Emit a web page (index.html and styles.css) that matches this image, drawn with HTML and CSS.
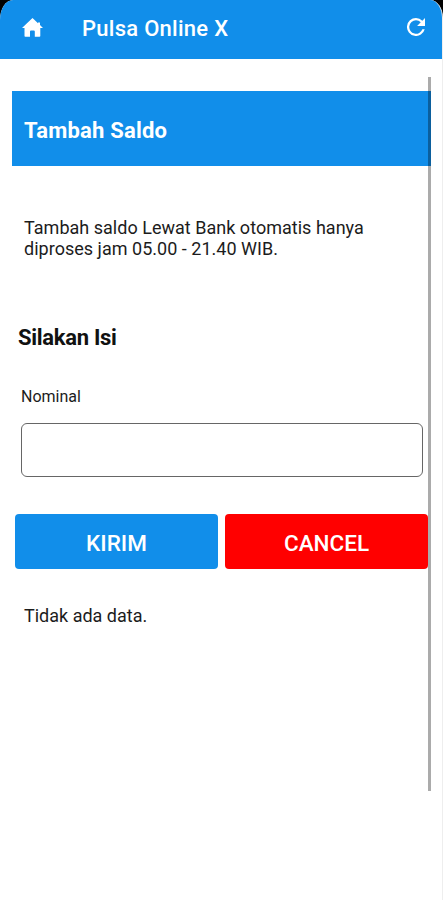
FILE: index.html
```
<!DOCTYPE html>
<html lang="id">
<head>
<meta charset="utf-8">
<title>Pulsa Online X</title>
<link rel="stylesheet" href="styles.css">
</head>
<body>
<div class="screen">
  <header class="topbar">
    <svg class="home" viewBox="0 0 21 19" aria-hidden="true"><path d="M10.5 0 0 10h2.500v8q0 .8.8.8H8v-5.300q0-1 1-1h2.800q1 0 1 1v5.300h4.700q.8 0 .8-.8v-8H21L18 7.100V4.500h-2v.8z"/></svg>
    <h1 class="app-title">Pulsa Online X</h1>
    <svg class="refresh" viewBox="4 4 16 16" preserveAspectRatio="none" aria-hidden="true"><path d="M17.650 6.350A7.960 7.960 0 0 0 12 4a8 8 0 1 0 7.730 10h-2.080A6 6 0 1 1 12 6c1.660 0 3.140.690 4.220 1.780L13 11h7V4z"/></svg>
  </header>
  <main class="content">
    <h2 class="banner">Tambah Saldo</h2>
    <p class="info">Tambah saldo Lewat Bank otomatis hanya<br>diproses jam 05.00 - 21.40 WIB.</p>
    <form class="form">
      <h3 class="form-title">Silakan Isi</h3>
      <label class="label" for="nominal">Nominal</label>
      <input class="input" id="nominal" type="text">
      <div class="actions">
        <button class="btn send" type="button">KIRIM</button>
        <button class="btn cancel" type="button">CANCEL</button>
      </div>
    </form>
    <p class="empty">Tidak ada data.</p>
  </main>
  <div class="scrollbar"></div>
</div>
</body>
</html>
```

FILE: styles.css
```
* { box-sizing: border-box; }
html { background: #000; }
body { margin: 0; font-family: Roboto, sans-serif; color: #1c1c1c; }
h1, h2, h3, p { margin: 0; }
.screen {
  position: relative;
  height: 900px;
  background: #fff;
  border-radius: 13px 13px 0 0 / 20px 18px 0 0;
  border-right: 1px solid #eee;
  overflow: hidden;
}
.topbar {
  display: flex;
  align-items: center;
  height: 59px;
  margin-right: -1px;
  padding: 0 18px 4px 22px;
  background: #118eea;
  color: #fff;
}
.topbar svg { fill: #fff; }
.home { width: 21px; height: 19px; }
.app-title {
  flex: 1;
  padding: 2px 0 0 39px;
  font-size: 22px;
  line-height: 26px;
  font-weight: 500;
  letter-spacing: .27px;
}
.refresh { width: 18px; height: 18px; margin-top: -1px; }
.content { padding: 32px 11px 0 12px; }
.banner {
  height: 75px;
  padding-left: 12px;
  background: #118eea;
  color: #fff;
  font-size: 22px;
  line-height: 79px;
  font-weight: 700;
  letter-spacing: .2px;
}
.info {
  padding: 51px 0 0 12px;
  font-size: 18px;
  line-height: 21px;
  letter-spacing: .02px;
}
.form { padding-top: 66px; }
.form-title {
  padding-left: 6px;
  font-size: 22px;
  line-height: 26px;
  font-weight: 700;
  letter-spacing: -.3px;
  color: #111;
}
.label {
  display: block;
  margin: 36px 0 0 9px;
  font-size: 16px;
  line-height: 20px;
}
.input {
  display: block;
  width: 402px;
  height: 54px;
  margin: 16px 0 0 9px;
  border: 1px solid #666;
  border-radius: 6px;
  background: #fff;
  font: 18px Roboto, sans-serif;
  outline: 0;
}
.actions {
  display: flex;
  gap: 7px;
  margin: 37px 3px 0 3px;
}
.btn {
  flex: 1;
  height: 55px;
  border: 0;
  border-radius: 4px;
  padding: 2px 0 0;
  color: #fff;
  font: 500 22.5px Roboto, sans-serif;
}
.send { background: #118eea; }
.cancel { background: #f00; }
.empty {
  padding: 36px 0 0 12px;
  font-size: 18px;
  line-height: 21px;
}
.scrollbar {
  position: absolute;
  top: 77px;
  left: 428px;
  width: 3px;
  height: 714px;
  background: rgba(0, 0, 0, .33);
}
```
